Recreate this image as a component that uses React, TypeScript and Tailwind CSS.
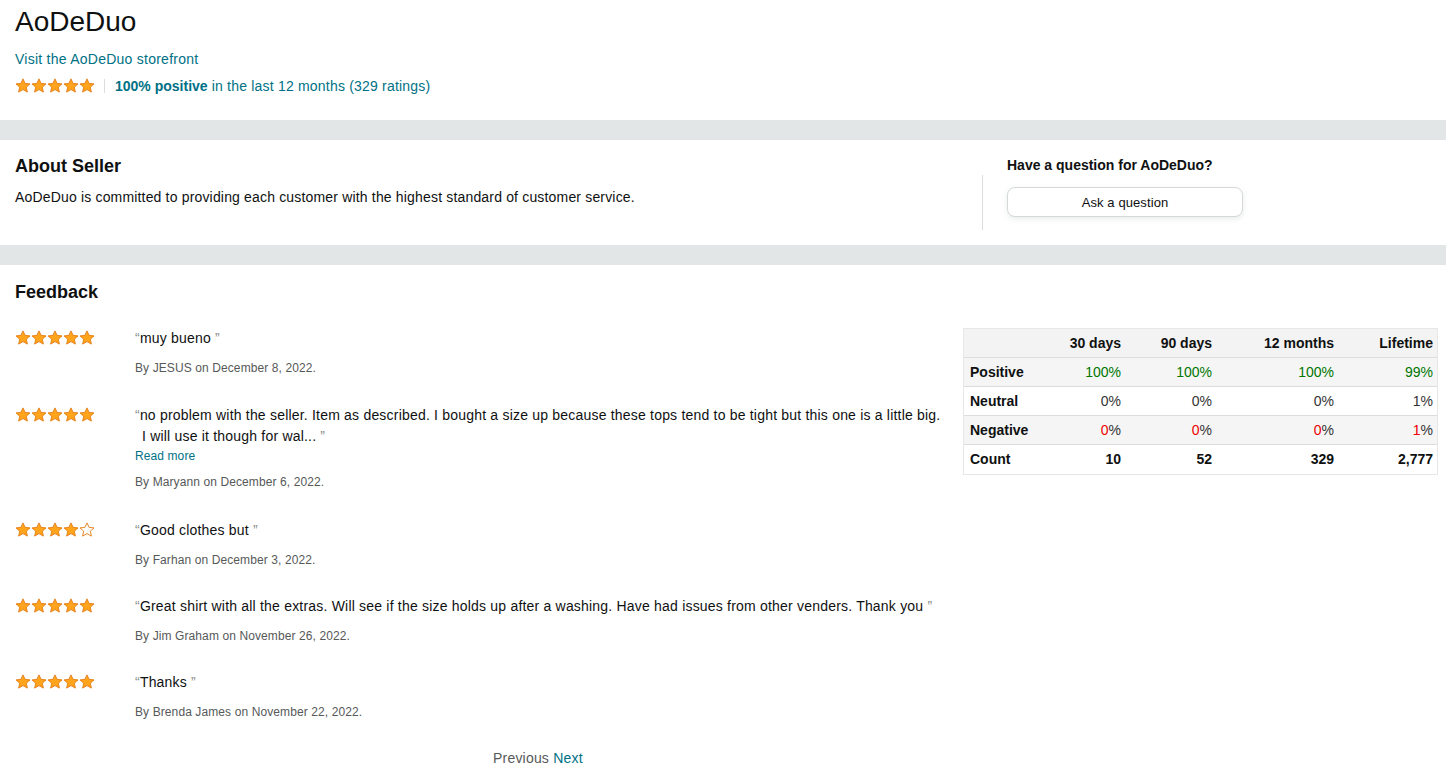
import React from "react";

const font = { fontFamily: '"Liberation Sans", Arial, sans-serif' };

function Star({ filled }: { filled: boolean }) {
  return (
    <svg width="16" height="16" viewBox="0 0 16 16">
      <path
        d="M8 0.9 L10.1 5.4 L15 5.9 L11.3 9.2 L12.4 14.1 L8 11.6 L3.6 14.1 L4.7 9.2 L1 5.9 L5.9 5.4 Z"
        fill={filled ? "#ffa41c" : "#ffffff"}
        stroke="#e47911"
        strokeWidth="0.9"
        strokeLinejoin="round"
      />
    </svg>
  );
}

function Stars({ n }: { n: number }) {
  return (
    <div className="flex">
      {[1, 2, 3, 4, 5].map((i) => (
        <Star key={i} filled={i <= n} />
      ))}
    </div>
  );
}

const reviews = [
  { stars: 5, text: "muy bueno", by: "By JESUS on December 8, 2022." },
  {
    stars: 5,
    text: "no problem with the seller. Item as described. I bought a size up because these tops tend to be tight but this one is a little big. I will use it though for wal...",
    more: true,
    by: "By Maryann on December 6, 2022.",
  },
  { stars: 4, text: "Good clothes but", by: "By Farhan on December 3, 2022." },
  {
    stars: 5,
    text: "Great shirt with all the extras. Will see if the size holds up after a washing. Have had issues from other venders. Thank you",
    by: "By Jim Graham on November 26, 2022.",
  },
  { stars: 5, text: "Thanks", by: "By Brenda James on November 22, 2022." },
];

type Cell = { v: string; c?: "g" | "r" };

const rows: { label: string; bg: string; cells: Cell[] }[] = [
  {
    label: "Positive",
    bg: "bg-[#f5f5f5]",
    cells: [
      { v: "100", c: "g" },
      { v: "100", c: "g" },
      { v: "100", c: "g" },
      { v: "99", c: "g" },
    ],
  },
  { label: "Neutral", bg: "bg-white", cells: [{ v: "0" }, { v: "0" }, { v: "0" }, { v: "1" }] },
  {
    label: "Negative",
    bg: "bg-[#f5f5f5]",
    cells: [
      { v: "0", c: "r" },
      { v: "0", c: "r" },
      { v: "0", c: "r" },
      { v: "1", c: "r" },
    ],
  },
];

const grid = "grid grid-cols-[97px_66px_91px_122px_99px] h-[29px] items-center";

export default function App() {
  return (
    <div className="bg-white text-[#0f1111] min-h-[771px]" style={font}>
      {/* header */}
      <div className="px-[15px] pt-[4px] pb-[24px]">
        <h1 className="text-[28px] leading-[36px]">AoDeDuo</h1>
        <a className="block mt-[9px] text-[14px] leading-[20px] tracking-[0.25px] text-[#007185]" href="#">
          Visit the AoDeDuo storefront
        </a>
        <div className="flex items-center mt-[7px] h-[20px]">
          <Stars n={5} />
          <div className="w-px h-[14px] bg-[#ddd] ml-[9px] mr-[10px]" />
          <span className="text-[14px] tracking-[0.2px] text-[#007185]">
            <b className="tracking-normal">100% positive</b> in the last 12 months (329 ratings)
          </span>
        </div>
      </div>

      <div className="h-[20px] bg-[#e3e6e6]" />

      {/* about */}
      <div className="flex h-[105px] px-[15px]">
        <div className="flex-1 pt-[14px]">
          <h2 className="text-[18px] leading-[24px] font-bold">About Seller</h2>
          <p className="mt-[9px] text-[14px] leading-[20px] tracking-[0.17px]">
            AoDeDuo is committed to providing each customer with the highest standard of customer service.
          </p>
        </div>
        <div className="flex w-[449px] shrink-0">
          <div className="w-px h-[55px] mt-[35px] bg-[#ddd]" />
          <div className="pl-[24px] pt-[15px]">
            <div className="text-[14px] leading-[20px] font-bold">Have a question for AoDeDuo?</div>
            <button className="mt-[12px] w-[236px] h-[30px] pt-[1px] rounded-[8px] border border-[#d5d9d9] bg-white text-[13px] tracking-[0.1px] shadow-[0_2px_5px_rgba(213,217,217,0.5)]">
              Ask a question
            </button>
          </div>
        </div>
      </div>

      <div className="h-[20px] bg-[#e3e6e6]" />

      {/* feedback */}
      <div className="pl-[15px] pr-[8px] pt-[15px]">
        <h2 className="text-[18px] leading-[24px] font-bold">Feedback</h2>
        <div className="flex gap-[18px] mt-[24px]">
          <div className="flex-1">
            {reviews.map((r, i) => (
              <div
                key={i}
                className={`flex ${i === 0 ? "mb-[28px]" : i === 1 ? "mb-[29px]" : "mb-[27px]"}`}
              >
                <div className="w-[120px] shrink-0 pt-[2px]">
                  <Stars n={r.stars} />
                </div>
                <div className="flex-1">
                  <p className="pl-[7px] -indent-[7px] text-[14px] leading-[21px] tracking-[0.2px]">
                    <span className="text-[#888c8c]">“</span>
                    {r.text}
                    <span className="text-[#888c8c]"> ”</span>
                  </p>
                  {r.more && (
                    <a className="block text-[12px] leading-[18px] tracking-[0.1px] text-[#007185]" href="#">
                      Read more
                    </a>
                  )}
                  <div
                    className={`${r.more ? "mt-[8px]" : "mt-[10px]"} text-[12px] leading-[18px] tracking-[0.1px] text-[#565959]`}
                  >
                    {r.by}
                  </div>
                </div>
              </div>
            ))}
            <div className="mt-[1px] pl-[478px] text-[14px] leading-[20px] tracking-[0.2px]">
              <span className="text-[#565959]">Previous</span>{" "}
              <a className="text-[#007185]" href="#">
                Next
              </a>
            </div>
          </div>

          <div className="w-[475px] shrink-0 self-start border border-[#e7e7e7] text-[14px]">
            <div className={`${grid} bg-[#f3f3f3] font-bold border-b border-[#ddd]`}>
              <div />
              <div className="text-right pr-[6px]">30 days</div>
              <div className="text-right pr-[6px]">90 days</div>
              <div className="text-right pr-[6px]">12 months</div>
              <div className="text-right pr-[6px]">Lifetime</div>
            </div>
            {rows.map((row) => (
              <div key={row.label} className={`${grid} ${row.bg} border-b border-[#ddd]`}>
                <div className="pl-[6px] font-bold">{row.label}</div>
                {row.cells.map((c, j) => (
                  <div key={j} className="text-right pr-[6px] text-[#333]">
                    {c.c === "g" ? (
                      <span className="text-[#007600]">{c.v}%</span>
                    ) : c.c === "r" ? (
                      <>
                        <span className="text-[#e00]">{c.v}</span>%
                      </>
                    ) : (
                      <>{c.v}%</>
                    )}
                  </div>
                ))}
              </div>
            ))}
            <div className={`${grid} bg-white font-bold`}>
              <div className="pl-[6px]">Count</div>
              <div className="text-right pr-[6px]">10</div>
              <div className="text-right pr-[6px]">52</div>
              <div className="text-right pr-[6px]">329</div>
              <div className="text-right pr-[6px]">2,777</div>
            </div>
          </div>
        </div>
      </div>
    </div>
  );
}
